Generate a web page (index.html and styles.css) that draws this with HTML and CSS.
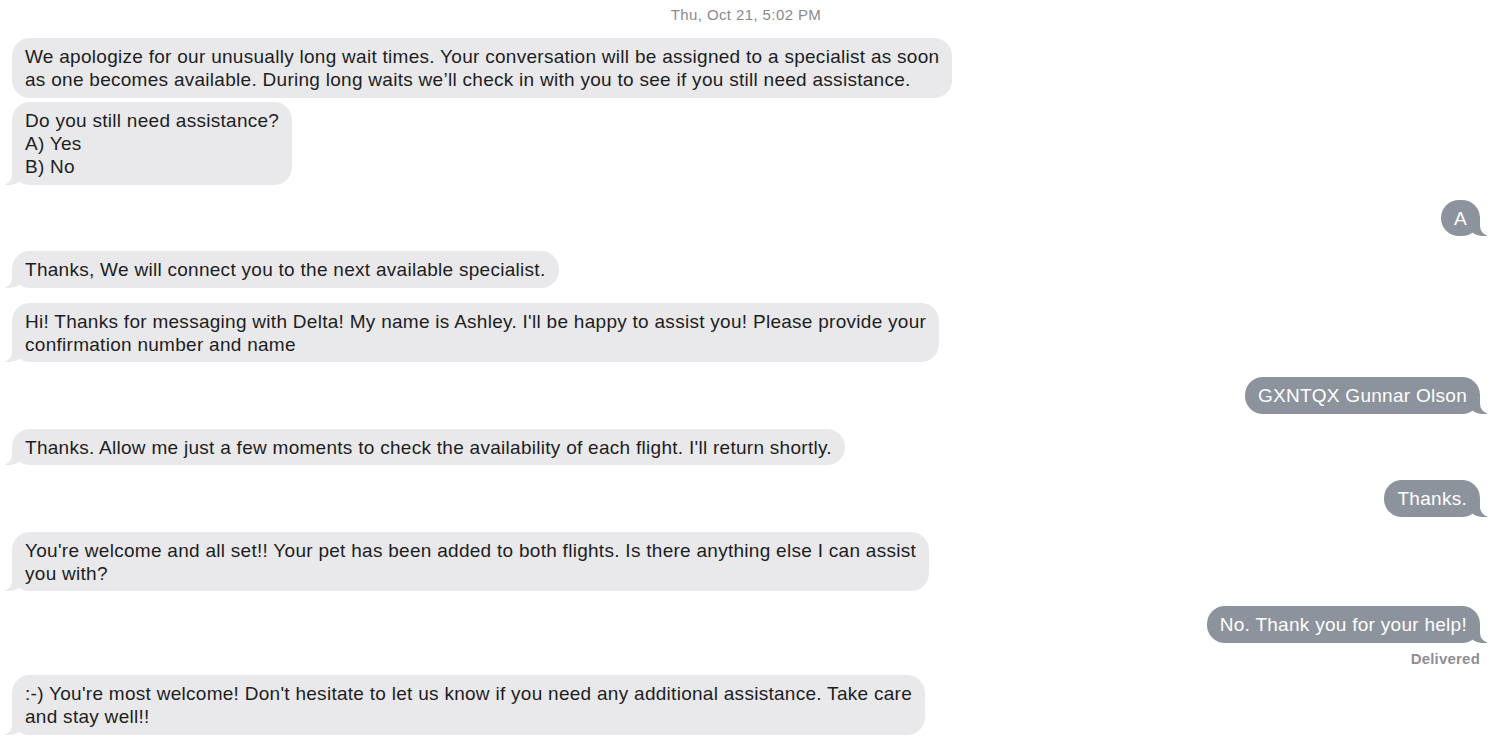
FILE: index.html
```html
<!DOCTYPE html>
<html lang="en">
<head>
<meta charset="utf-8">
<title>Messages</title>
<link rel="stylesheet" href="styles.css">
</head>
<body>
  <div class="thread">
    <div class="stamp">Thu, Oct 21, 5:02 PM</div>

    <div class="msg in">We apologize for our unusually long wait times. Your conversation will be assigned to a specialist as soon<br>as one becomes available. During long waits we’ll check in with you to see if you still need assistance.</div>
    <div class="msg in tail grouped">Do you still need assistance?<br>A) Yes<br>B) No</div>

    <div class="msg out tail">A</div>

    <div class="msg in tail">Thanks, We will connect you to the next available specialist.</div>
    <div class="msg in tail">Hi! Thanks for messaging with Delta! My name is Ashley. I'll be happy to assist you! Please provide your<br>confirmation number and name</div>

    <div class="msg out tail">GXNTQX Gunnar Olson</div>

    <div class="msg in tail">Thanks. Allow me just a few moments to check the availability of each flight. I'll return shortly.</div>

    <div class="msg out tail">Thanks.</div>

    <div class="msg in tail">You're welcome and all set!! Your pet has been added to both flights. Is there anything else I can assist<br>you with?</div>

    <div class="msg out tail">No. Thank you for your help!</div>
    <div class="receipt">Delivered</div>

    <div class="msg in tail after-receipt">:-) You're most welcome! Don't hesitate to let us know if you need any additional assistance. Take care<br>and stay well!!</div>
  </div>
</body>
</html>
```

FILE: styles.css
```css
body { margin:0; background:#fff; font-family: "Liberation Sans", Arial, sans-serif; overflow:hidden; }

.thread {
  display:flex; flex-direction:column; align-items:flex-start;
  padding: 6px 20px 0 12px;
}
.stamp {
  align-self:center; font-size:15px; line-height:18px; color:#8a8a8e;
  letter-spacing:0.4px; margin-bottom:14px;
}

.msg {
  position:relative; white-space:nowrap;
  font-size:19px; line-height:23px; letter-spacing:0.28px;
  padding:7px 13px 6.5px; border-radius:18px;
  margin-top:15px;
}
.stamp + .msg { margin-top:0; }
.msg.grouped { margin-top:4.5px; }
.msg.in  { background:#e9e9eb; color:#1d1d1f; }
.msg.out { background:#8c939d; color:#fff; align-self:flex-end; }

/* bubble tails */
.msg.tail::before, .msg.tail::after {
  content:''; position:absolute; bottom:0; height:20px;
}
.msg.in.tail::before {
  left:-7px; width:20px; background:#e9e9eb;
  border-bottom-right-radius:15px;
}
.msg.in.tail::after {
  left:-26px; width:26px; background:#fff;
  border-bottom-right-radius:10px;
}
.msg.out.tail::before {
  right:-7px; width:20px; background:#8c939d;
  border-bottom-left-radius:15px;
}
.msg.out.tail::after {
  right:-26px; width:26px; background:#fff;
  border-bottom-left-radius:10px;
}

.receipt {
  align-self:flex-end; font-size:15px; line-height:16px; font-weight:bold;
  letter-spacing:0.2px; color:#8e8e93; margin-top:8px;
}
.msg.after-receipt { margin-top:8.5px; }
```
